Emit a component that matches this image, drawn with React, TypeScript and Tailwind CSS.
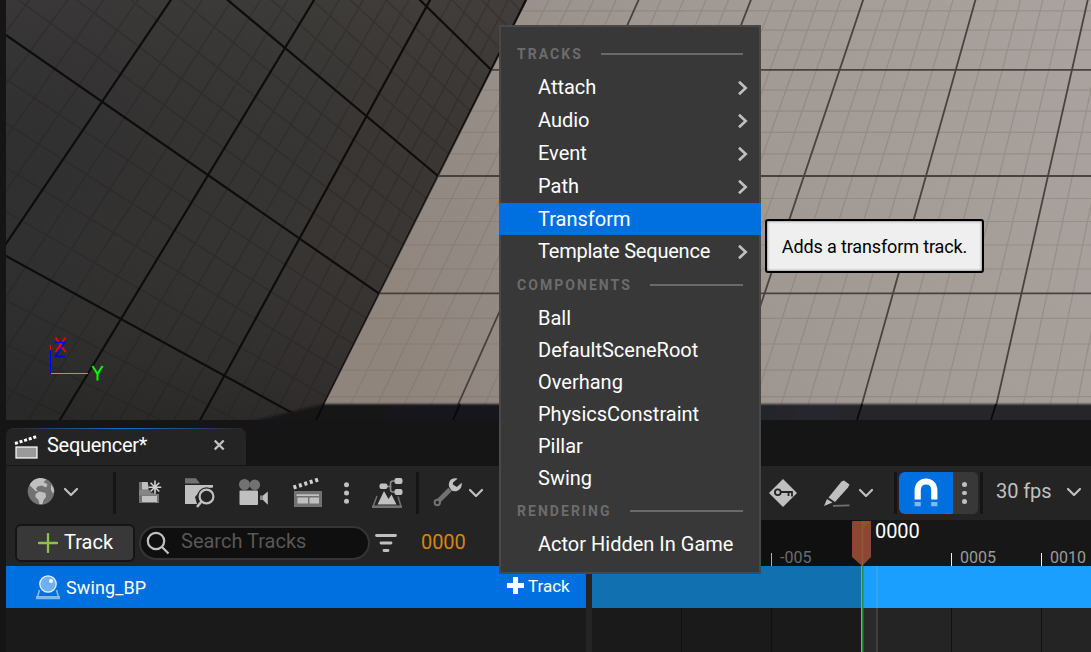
import type { ReactNode } from "react";

type Pt = [number, number];

/* Projective map from the unit square to a quadrilateral. */
function projector(p0: Pt, p1: Pt, p2: Pt, p3: Pt) {
  const sx = p0[0] - p1[0] + p2[0] - p3[0];
  const sy = p0[1] - p1[1] + p2[1] - p3[1];
  const dx1 = p1[0] - p2[0];
  const dx2 = p3[0] - p2[0];
  const dy1 = p1[1] - p2[1];
  const dy2 = p3[1] - p2[1];
  const det = dx1 * dy2 - dx2 * dy1;
  const g = (sx * dy2 - dx2 * sy) / det;
  const h = (dx1 * sy - sx * dy1) / det;
  const a = p1[0] - p0[0] + g * p1[0];
  const b = p3[0] - p0[0] + h * p3[0];
  const d = p1[1] - p0[1] + g * p1[1];
  const e = p3[1] - p0[1] + h * p3[1];
  return (u: number, v: number): Pt => {
    const w = g * u + h * v + 1;
    return [(a * u + b * v + p0[0]) / w, (d * u + e * v + p0[1]) / w];
  };
}

const wallQuad = projector([285, 48], [438, 176], [313.7, 424.7], [121, 319]);
const wall = (u: number, v: number) => wallQuad((u - 1) / 2, v / 2);
const floorQuad = projector([438, 176], [1048, 176], [992, 424], [313.7, 424]);
const floor = (u: number, v: number) => floorQuad(u / 5, v / 2);

function gridPath(
  map: (u: number, v: number) => Pt,
  u0: number,
  u1: number,
  v0: number,
  v1: number,
  major: boolean,
) {
  let d = "";
  const seg = (a: Pt, b: Pt) => {
    d += `M${a[0].toFixed(1)} ${a[1].toFixed(1)}L${b[0].toFixed(1)} ${b[1].toFixed(1)}`;
  };
  for (let i = u0 * 5; i <= u1 * 5; i++) {
    if ((i % 5 === 0) === major) seg(map(i / 5, v0), map(i / 5, v1));
  }
  for (let i = v0 * 5; i <= v1 * 5; i++) {
    if ((i % 5 === 0) === major) seg(map(u0, i / 5), map(u1, i / 5));
  }
  return d;
}

function Viewport() {
  return (
    <svg className="ml-[6px] block h-[420px] w-[1085px]" viewBox="6 0 1085 420">
      <defs>
        <linearGradient id="wallShade" gradientUnits="userSpaceOnUse" x1="20" y1="120" x2="450" y2="300">
          <stop offset="0" stopColor="#302f30" />
          <stop offset="0.5" stopColor="#353432" />
          <stop offset="0.8" stopColor="#3a3634" />
          <stop offset="1" stopColor="#3b3634" />
        </linearGradient>
        <linearGradient id="wallFall" x1="0" y1="0" x2="0" y2="1">
          <stop offset="0" stopColor="#777069" stopOpacity="0.13" />
          <stop offset="0.5" stopColor="#333333" stopOpacity="0" />
          <stop offset="1" stopColor="#161616" stopOpacity="0.35" />
        </linearGradient>
        <linearGradient id="floorShade" gradientUnits="userSpaceOnUse" x1="380" y1="330" x2="1091" y2="60">
          <stop offset="0" stopColor="#8f857c" />
          <stop offset="0.16" stopColor="#938a84" />
          <stop offset="0.5" stopColor="#a09892" />
          <stop offset="1" stopColor="#aaa29e" />
        </linearGradient>
        <linearGradient id="shadowShade" x1="0" y1="0" x2="1" y2="0">
          <stop offset="0" stopColor="#1a1a1b" />
          <stop offset="0.1" stopColor="#131518" />
          <stop offset="0.4" stopColor="#1a1c20" />
          <stop offset="0.65" stopColor="#26282d" />
          <stop offset="1" stopColor="#26272b" />
        </linearGradient>
        <clipPath id="wallClip">
          <path d="M6 0H527L438 176L379 294L324 404L316 420H6Z" />
        </clipPath>
        <clipPath id="floorClip">
          <path d="M527 0H1091V420H316L324 404L379 294L438 176Z" />
        </clipPath>
        <filter id="soft" x="-5%" y="-30%" width="110%" height="160%">
          <feGaussianBlur stdDeviation="1.2" />
        </filter>
      </defs>
      <g clipPath="url(#floorClip)">
        <rect x="300" y="0" width="791" height="420" fill="url(#floorShade)" />
        <path d={gridPath(floor, -1, 8, -3, 3, false)} stroke="#716860" strokeOpacity="0.3" strokeWidth="1.2" />
        <path d={gridPath(floor, -1, 8, -3, 3, true)} stroke="#3f3835" strokeOpacity="0.9" strokeWidth="1.8" />
      </g>
      <g clipPath="url(#wallClip)">
        <rect x="6" y="0" width="530" height="420" fill="url(#wallShade)" />
        <rect x="6" y="0" width="530" height="420" fill="url(#wallFall)" />
        <path d={gridPath(wall, -2, 3, -2, 4, false)} stroke="#1c1b1a" strokeOpacity="0.24" strokeWidth="1.5" />
        <path d={gridPath(wall, -2, 3, -2, 4, true)} stroke="#0d0d0d" strokeWidth="2.2" />
      </g>
      <path d="M244 423L324 404H1100V430H244Z" fill="url(#shadowShade)" filter="url(#soft)" />
      <path d="M324 404L316 420M460 404L453 420M862 404L857 420M996 404L991 420" stroke="#08090a" strokeWidth="1.8" />
      <path d="M50.5 345V350" stroke="#f00" />
      <path d="M50.5 350V374" stroke="#00f" />
      <path d="M51 373.5H88" stroke="#0f0" />
      <g fill="none" strokeWidth="1.7">
        <path d="M55.5 337.5L65.5 352M65.500 337.500L55.5 352" stroke="#f00" />
        <path d="M55 342.500H64.500L55.500 356.300H65" stroke="#00f" />
        <path d="M92.500 366L97.500 374L102.500 366M97.500 374V380.500" stroke="#0f0" strokeWidth="2" />
      </g>
    </svg>
  );
}

function Tool({ x, w, className, children }: { x: number; w: number; className: string; children: ReactNode }) {
  return (
    <svg className={`block h-[30px] shrink-0 ${className}`} viewBox={`${x} 478 ${w} 30`} fill="#c0c0c0">
      {children}
    </svg>
  );
}

function Chevron({ className }: { className: string }) {
  return (
    <svg
      className={`block h-[10px] w-[16px] shrink-0 ${className}`}
      viewBox="0 0 16 10"
      fill="none"
      stroke="#c0c0c0"
      strokeWidth="2.2"
      strokeLinecap="round"
      strokeLinejoin="round"
    >
      <path d="M2 2L8 8L14 2" />
    </svg>
  );
}

function Separator({ className }: { className: string }) {
  return <div className={`h-[42px] w-[3px] shrink-0 bg-[#151515] ${className}`} />;
}

function Toolbar() {
  return (
    <div className="ml-[6px] flex h-[54px] items-center bg-[#242424]">
      <Tool x={27} w={28} className="ml-[21px] w-[28px]">
        <circle cx="41" cy="491.300" r="13.300" fill="#727272" />
        <path d="M30 484C32.500 480 37 477.900 41 477.900L46.500 479.500L43.500 482L47.500 484.500L46 487.500L42 485.500L37.500 486.500L36 489L38 491.500L35.500 491L30 485.500Z" />
        <path d="M35.500 494L39.500 491.500L45.500 493L46 497L43.500 500L42.500 504.300H39.500L38.500 500L35.500 497Z" />
        <path d="M51 484.500L53.500 488L54.200 491L53 493.500L51 490Z" />
      </Tool>
      <Chevron className="ml-[8px] mb-[3px]" />
      <Separator className="ml-[34px]" />
      <Tool x={138} w={24} className="ml-[22px] w-[24px]">
        <path d="M139 482H148V491H139Z" fill="#727272" />
        <path d="M139 482H142V503H139ZM156 494H159V503H156Z" fill="#727272" />
        <path d="M142 482H147.500L149.500 489.500H142ZM142 495.500H157V502.500H142Z" />
        <path d="M139 490H150L158 495.500H139Z" fill="#858585" />
        <path d="M155 481V493.500M148.500 487.300H161.500M150.500 482.800L159.500 491.800M159.500 482.800L150.500 491.800" stroke="#242424" strokeWidth="4" />
        <path d="M155 480.500V493.800M148.500 487.200H161.300M150.500 482.800L159.300 491.500M159.300 482.800L150.500 491.500" stroke="#d0d0d0" strokeWidth="1.6" />
      </Tool>
      <Tool x={184} w={32} className="ml-[22px] w-[32px]">
        <path d="M185 478.300H196L200 483.500H185Z" fill="#727272" />
        <path d="M185 485H213V487.500L202 489L195 497L197 504H185Z" />
        <circle cx="206.500" cy="496.500" r="9.300" fill="#242424" />
        <circle cx="206.500" cy="496.500" r="6.900" fill="none" stroke="#c0c0c0" strokeWidth="2.200" />
        <path d="M201.500 501.500L197 507" stroke="#c0c0c0" strokeWidth="2.600" />
      </Tool>
      <Tool x={238} w={31} className="ml-[22px] w-[31px]">
        <circle cx="244.500" cy="484.500" r="5.500" fill="#727272" />
        <circle cx="254.800" cy="484.800" r="5.300" fill="#727272" />
        <rect x="239.500" y="490.500" width="18.500" height="14.500" rx="1" />
        <path d="M260 495.500H263V500H260Z" fill="#8a8a8a" />
        <path d="M263 495.500L267.800 491.500V504.800L263 500Z" />
      </Tool>
      <Tool x={292} w={31} className="ml-[23px] w-[31px]">
        <path d="M293.500 487.500L320 479" fill="none" stroke="#d0d0d0" strokeWidth="4" strokeDasharray="3 2.700" />
        <path d="M294 491H322V507H294Z" fill="#727272" />
        <path d="M296.500 494.300H319V496H296.500ZM297.500 497.500H308V503.500H297.500ZM309.500 497.500H319V503.500H309.500Z" />
      </Tool>
      <Tool x={343} w={7} className="ml-[20px] w-[7px]">
        <circle cx="346.500" cy="484.700" r="2.500" />
        <circle cx="346.500" cy="493" r="2.500" />
        <circle cx="346.500" cy="501.300" r="2.500" />
      </Tool>
      <Tool x={371} w={32} className="ml-[21px] w-[32px]">
        <path d="M386 486.500H391.500M396 481H393Q390.500 481 390.500 483.500V489.500Q390.500 492 393 492H396" fill="none" stroke="#8a8a8a" strokeWidth="1.600" />
        <rect x="379.500" y="483.500" width="8" height="5.500" rx="2" />
        <rect x="394.500" y="478" width="8" height="6" rx="2" />
        <rect x="394.500" y="489" width="8" height="6" rx="2" />
        <path d="M377 496L373 506.500H401L398 496.500" fill="none" stroke="#727272" strokeWidth="1.500" />
        <path d="M372 505.500H402V508H372Z" fill="#727272" />
        <path d="M377.500 504.500L384 491L388.500 499L391.500 494.500L396.500 504.500Z" />
      </Tool>
      <Separator className="ml-[13px]" />
      <Tool x={433} w={30} className="ml-[14px] w-[30px]">
        <path d="M439 500.500L450 489.500" fill="none" stroke="#727272" strokeWidth="4.600" />
        <circle cx="437.300" cy="502.500" r="2.700" fill="#242424" stroke="#727272" strokeWidth="2" />
        <path d="M457.500 478.700C452 477 448 481 449 486.500L451.500 490.500C457 493 462.500 489 461.700 482.800L456.800 487L452.900 484.500L453 482.500Z" />
      </Tool>
      <Chevron className="ml-[5px]" />
      <Tool x={768} w={30} className="ml-[284px] w-[30px]">
        <path d="M783 479L797 493L783 507L769 493Z" />
        <circle cx="777.800" cy="492.300" r="2.900" fill="none" stroke="#242424" strokeWidth="1.800" />
        <path d="M780.500 492H792V496.500M788.500 492V496" fill="none" stroke="#242424" strokeWidth="1.800" />
      </Tool>
      <Tool x={823} w={28} className="ml-[25px] w-[28px]">
        <path d="M844 480.500L849.500 484.500L848 487.500L835 502L828.500 497.500L841.500 481.500Z" />
        <path d="M827 499L832.500 502.500L824 506Z" />
        <path d="M833 505.800L849.500 505.300" stroke="#727272" strokeWidth="1.800" />
      </Tool>
      <Chevron className="ml-[7px]" />
      <Separator className="ml-[20px]" />
      <div className="ml-[2px] flex h-[42px] w-[54px] shrink-0 items-center justify-center rounded-l-[6px] bg-[#0070e0]">
        <svg className="h-[30px] w-[24px]" viewBox="914 478 24 30">
          <path d="M917.700 499.500V490.500C917.700 478.500 934.300 478.500 934.300 490.500V499.500" fill="none" stroke="#fff" strokeWidth="6.200" />
          <path d="M914.600 502H920.800V506.300H914.600ZM931.200 502H937.400V506.300H931.200Z" fill="#80b8f0" />
        </svg>
      </div>
      <div className="flex h-[42px] w-[25px] shrink-0 flex-col items-center justify-center gap-[4px] rounded-r-[5px] bg-[#383838] pr-[2px]">
        <i className="size-[4.500px] rounded-full bg-[#c0c0c0]" />
        <i className="size-[4.500px] rounded-full bg-[#c0c0c0]" />
        <i className="size-[4.500px] rounded-full bg-[#c0c0c0]" />
      </div>
      <Separator className="ml-[2px]" />
      <span className="ml-[13px] w-[70px] shrink-0 pb-[4px] text-[20px] leading-[24px] tracking-[-0.1px] text-[#c0c0c0]">30 fps</span>
      <Chevron className="mb-[3px]" />
    </div>
  );
}

function TabStrip() {
  return (
    <div className="ml-[6px] mt-[8px] h-[38px]">
      <div className="relative flex h-[37px] w-[240px] items-center overflow-hidden rounded-t-[7px] bg-[#242424]">
        <div className="absolute inset-x-0 top-0 h-[1px] bg-linear-to-r from-[#242424] via-[#0070e0] to-[#242424]" />
        <svg className="ml-[8px] mb-[2px] h-[26px] w-[26px]" viewBox="14 432 26 26">
          <path d="M15 442.500L37 435.500" fill="none" stroke="#fff" strokeWidth="3" strokeDasharray="3 1.800" />
          <rect x="16" y="446" width="21" height="11" fill="#9a9a9a" stroke="#fff" strokeWidth="1.200" />
        </svg>
        <span className="ml-[7px] w-[160px] pb-[3px] text-[20px] leading-[24px] tracking-[-0.280px] text-white">Sequencer*</span>
        <svg className="mb-[3px] ml-[7px] h-[12px] w-[11px]" viewBox="0 0 11 12" stroke="#c0c0c0" strokeWidth="2.300">
          <path d="M0.700 1.500L9.700 10.500M9.700 1.500L0.700 10.500" />
        </svg>
      </div>
    </div>
  );
}

function TrackPanel() {
  return (
    <div className="flex w-[580px] shrink-0 flex-col bg-[#1a1a1a]">
      <div className="flex h-[46px] shrink-0 items-center bg-[#242424]">
        <div className="ml-[9px] flex h-[38px] w-[120px] items-center rounded-[6px] border-2 border-[#151515] bg-[#383838]">
          <svg className="ml-[21px] size-[20px]" viewBox="0 0 20 20" stroke="#8bc24a" strokeWidth="2.300" strokeLinecap="round">
            <path d="M10 1V19M1 10H19" />
          </svg>
          <span className="ml-[6px] pb-[2px] text-[20px] leading-[24px] text-white">Track</span>
        </div>
        <div className="ml-[4px] flex h-[34px] w-[231px] items-center rounded-full border-2 border-[#353535] bg-[#0f0f0f]">
          <svg className="ml-[5px] h-[24px] w-[24px]" viewBox="0 0 24 24" fill="none" stroke="#c0c0c0" strokeWidth="2.200">
            <circle cx="10" cy="10" r="8.200" />
            <path d="M15.500 15.500L22.500 22.500" />
          </svg>
          <span className="ml-[11px] pb-[5px] text-[20px] leading-[24px] text-[#575757]">Search Tracks</span>
        </div>
        <svg className="ml-[5px] h-[20px] w-[22px]" viewBox="0 0 22 20" stroke="#c0c0c0" strokeWidth="2.800" strokeLinecap="round">
          <path d="M1.500 2.500H20.500M6 10H16M9 17.500H13" />
        </svg>
        <span className="ml-[24px] pb-[2px] text-[20px] leading-[24px] tracking-[-0.1px] text-[#d88411]">0000</span>
      </div>
      <div className="flex h-[42px] shrink-0 items-center bg-[#0070e0]">
        <svg className="ml-[29px] h-[26px] w-[26px]" viewBox="35 574 26 26">
          <path d="M39.500 590L37 598.500H59L56.500 590" fill="none" stroke="#80b8f0" strokeWidth="1.600" />
          <path d="M36 596H60V599H36Z" fill="#80b8f0" />
          <circle cx="48" cy="584" r="9.500" fill="#0070e0" />
          <circle cx="48" cy="584" r="8.200" fill="#6fb0f2" stroke="#e4f0fc" strokeWidth="1.300" />
          <circle cx="51" cy="581" r="2" fill="#fff" />
        </svg>
        <span className="ml-[5px] w-[441px] pt-[2px] text-[18px] leading-[22px] tracking-[0.120px] text-white">Swing_BP</span>
        <svg className="mb-[3px] size-[17px]" viewBox="0 0 17 17" fill="#fff">
          <path d="M6 0H11V6H17V11H11V17H6V11H0V6H6Z" />
        </svg>
        <span className="ml-[4px] pb-[3px] text-[17px] leading-[22px] text-white">Track</span>
      </div>
    </div>
  );
}

function Timeline() {
  return (
    <div className="relative flex min-w-0 grow flex-col">
      <div className="flex h-[46px] shrink-0">
        <div className="w-[270px] bg-[#101010]" />
        <div className="grow bg-[#171717]" />
      </div>
      <div className="flex h-[42px] shrink-0">
        <div className="w-[270px] bg-[#1170b0]" />
        <div className="grow bg-[#1a9fff]" />
      </div>
      <div className="flex grow">
        <div className="w-[270px] bg-[#1a1a1a]" />
        <div className="w-[15px] bg-[#2a2a2a]" />
        <div className="grow bg-[#242424]" />
      </div>
      <svg className="absolute inset-0 h-[132px] w-[499px]" viewBox="592 520 499 132">
        <path d="M771.500 553V566" stroke="#b0b0b0" />
        <path d="M951.500 553V566M1041.500 553V566" stroke="#f0f0f0" />
        <path d="M681.500 608V652M771.500 608V652M951.500 608V652M1041.500 608V652" stroke="#111" />
        <path d="M877 566V608" stroke="#3aa5ee" strokeWidth="1.500" />
        <path d="M877 608V652" stroke="#464646" strokeWidth="1.500" />
        <path d="M852 522Q852 521 853 521H870Q871 521 871 522V557L862 566L852 557Z" fill="#8d4634" />
        <path d="M862 521H871L862 530Z" fill="#84572f" />
        <path d="M862.500 521V566" stroke="#8a5c2e" strokeWidth="1.500" />
        <path d="M861.500 566V652" stroke="#8fa0a0" />
        <path d="M862.700 566V652" stroke="#2c8a3c" strokeWidth="1.500" />
      </svg>
      <span className="absolute left-[283px] top-0 text-[20px] leading-[22px] tracking-[-0.1px] text-white">0000</span>
      <span className="absolute left-[188px] top-[28px] text-[16px] leading-[20px] text-[#6c6c6c]">-005</span>
      <span className="absolute left-[368px] top-[28px] text-[16px] leading-[20px] text-[#9a9a9a]">0005</span>
      <span className="absolute left-[458px] top-[28px] text-[16px] leading-[20px] text-[#9a9a9a]">0010</span>
    </div>
  );
}

function MenuHeader({ children }: { children: ReactNode }) {
  return (
    <div className="mx-[16px] flex h-[34px] items-center text-[#6c6c6c]">
      <span className="text-[14px] font-bold leading-[18px] tracking-[2.050px]">{children}</span>
      <div className="ml-[18px] h-[2px] grow bg-[#6a6a6a]" />
    </div>
  );
}

function MenuItem({
  label,
  submenu,
  short,
  tight,
}: {
  label: string;
  submenu?: boolean;
  short?: boolean;
  tight?: boolean;
}) {
  return (
    <div className={`flex items-center justify-between pl-[37px] pr-[10px] ${short ? "h-[32px]" : "h-[33px] pb-[2px]"}`}>
      <span className={`text-[20px] leading-[24px] text-white ${tight ? "tracking-[-0.220px]" : ""}`}>{label}</span>
      {submenu && (
        <svg className="mt-[2px] h-[16px] w-[12px]" viewBox="0 0 12 16" fill="none" stroke="#c0c0c0" strokeWidth="2.600">
          <path d="M2 1.800L8.700 8L2 14.200" />
        </svg>
      )}
    </div>
  );
}

function ContextMenu() {
  return (
    <div className="absolute left-[499px] top-[25px] h-[549px] w-[262px] border-2 border-[#484848] bg-[#383838] pt-[10px]">
      <MenuHeader>TRACKS</MenuHeader>
      <MenuItem label="Attach" submenu />
      <MenuItem label="Audio" submenu />
      <MenuItem label="Event" submenu />
      <MenuItem label="Path" submenu />
      <div className="-mx-[2px] bg-[#0070e0] px-[2px]">
        <MenuItem label="Transform" short />
      </div>
      <MenuItem label="Template Sequence" submenu tight />
      <MenuHeader>COMPONENTS</MenuHeader>
      <MenuItem label="Ball" short />
      <MenuItem label="DefaultSceneRoot" short />
      <MenuItem label="Overhang" short />
      <MenuItem label="PhysicsConstraint" short />
      <MenuItem label="Pillar" short />
      <MenuItem label="Swing" short />
      <MenuHeader>RENDERING</MenuHeader>
      <MenuItem label="Actor Hidden In Game" short />
    </div>
  );
}

export default function App() {
  return (
    <div className="relative flex h-[652px] w-[1091px] flex-col overflow-hidden whitespace-nowrap bg-[#151515] font-['Roboto',sans-serif]">
      <Viewport />
      <TabStrip />
      <Toolbar />
      <div className="ml-[6px] flex min-h-0 grow">
        <TrackPanel />
        <div className="w-[6px] shrink-0 bg-[#242424]" />
        <Timeline />
      </div>
      <ContextMenu />
      <div className="absolute left-[765px] top-[219px] flex h-[54px] w-[219px] items-center justify-center rounded-[3px] border-2 border-black bg-[#efefef] pt-[2px] text-[18px] leading-[22px] tracking-[-0.130px] text-black shadow-[inset_0_0_3px_rgba(0,0,0,0.6)]">
        Adds a transform track.
      </div>
    </div>
  );
}
